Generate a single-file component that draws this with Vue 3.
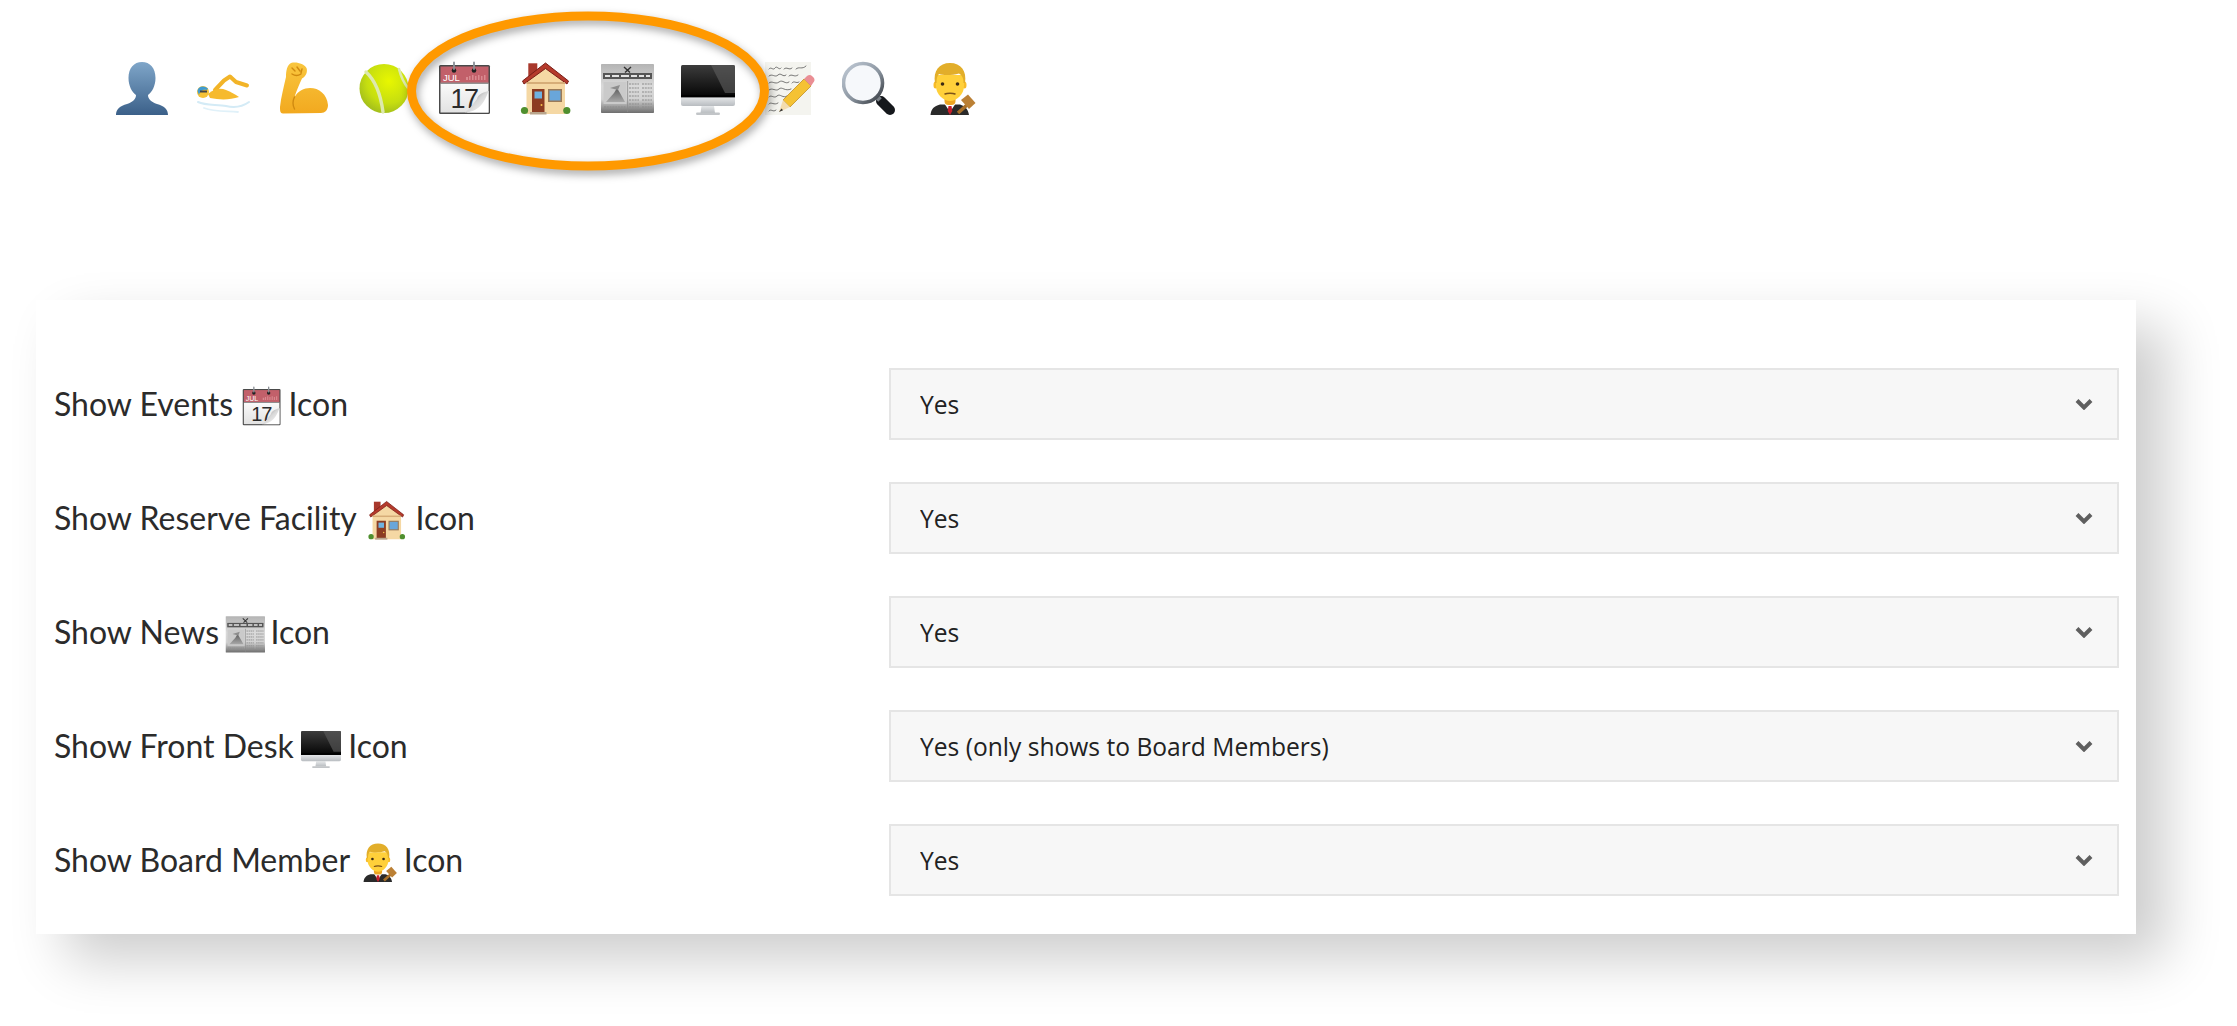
<script setup>
const topIcons = ['person', 'swimmer', 'muscle', 'tennis', 'calendar', 'house', 'news', 'monitor', 'memo', 'magnifier', 'judge']
const options = ['Yes', 'No', 'Yes (only shows to Board Members)']
const rows = [
  { label: 'Show Events', icon: 'calendar', value: 'Yes' },
  { label: 'Show Reserve Facility', icon: 'house', value: 'Yes' },
  { label: 'Show News', icon: 'news', value: 'Yes' },
  { label: 'Show Front Desk', icon: 'monitor', value: 'Yes (only shows to Board Members)' },
  { label: 'Show Board Member', icon: 'judge', value: 'Yes' },
]
</script>

<template>
  <div class="page">
    <svg class="defs" width="0" height="0" aria-hidden="true">
      <defs>
        <linearGradient id="g-person" x1="0" y1="0" x2="0" y2="1">
          <stop offset="0" stop-color="#7fa6c9" /><stop offset="1" stop-color="#3b6089" />
        </linearGradient>
        <linearGradient id="g-muscle" x1="0" y1="0" x2="0" y2="1">
          <stop offset="0" stop-color="#f9c63e" /><stop offset="1" stop-color="#f2a91f" />
        </linearGradient>
        <radialGradient id="g-ball" cx="0.6" cy="0.35" r="0.75">
          <stop offset="0" stop-color="#e8f700" /><stop offset="0.6" stop-color="#c6de10" /><stop offset="1" stop-color="#98b420" />
        </radialGradient>
        <linearGradient id="g-page" x1="0" y1="0" x2="0" y2="1">
          <stop offset="0" stop-color="#fafafa" /><stop offset="1" stop-color="#e2e2e2" />
        </linearGradient>
        <linearGradient id="g-curl" x1="0" y1="0" x2="1" y2="1">
          <stop offset="0" stop-color="#777" /><stop offset="0.5" stop-color="#d8d8d8" /><stop offset="1" stop-color="#ffffff" />
        </linearGradient>
        <linearGradient id="g-news" x1="0" y1="0" x2="0" y2="1">
          <stop offset="0" stop-color="#b4b4b4" /><stop offset="0.45" stop-color="#dadada" /><stop offset="0.72" stop-color="#d2d2d2" /><stop offset="1" stop-color="#6e6e6e" />
        </linearGradient>
        <linearGradient id="g-hill" x1="0" y1="0" x2="0" y2="1">
          <stop offset="0" stop-color="#5e5e5e" /><stop offset="1" stop-color="#a8a8a8" />
        </linearGradient>
        <linearGradient id="g-screen" x1="0" y1="0" x2="0" y2="1">
          <stop offset="0" stop-color="#3c3c3c" /><stop offset="0.85" stop-color="#0c0c0c" /><stop offset="1" stop-color="#000" />
        </linearGradient>
        <linearGradient id="g-chin" x1="0" y1="0" x2="0" y2="1">
          <stop offset="0" stop-color="#e6e8ea" /><stop offset="1" stop-color="#b8bcc0" />
        </linearGradient>
        <linearGradient id="g-lens" x1="0" y1="0" x2="1" y2="1">
          <stop offset="0" stop-color="#c2ccd8" /><stop offset="0.55" stop-color="#8b95a0" /><stop offset="1" stop-color="#30343a" />
        </linearGradient>
      </defs>

      <symbol id="person" viewBox="0 0 54 54">
        <path fill="url(#g-person)" d="M1 54C1 48 5 45 12 43C18 41 21 38 21 34C17 31 13.5 25 13.5 17C13.5 7 19 1 27 1C35 1 40.5 7 40.5 17C40.5 25 37 31 33 34C33 38 36 41 42 43C49 45 53 48 53 54Z" />
      </symbol>

      <symbol id="swimmer" viewBox="0 0 54 54">
        <g fill="none" stroke-linecap="round">
          <path stroke="#d4ebf6" stroke-width="2" d="M2 41C10 45 22 43 30 45C38 47 46 46 53 41" />
          <path stroke="#e0f1f9" stroke-width="1.800" d="M8 47C18 51 30 50 42 51" />
          <path stroke="#f2b428" stroke-width="4" stroke-linejoin="round" d="M19 29L28 19.500L34 15.500L40 21L51 24.500" />
        </g>
        <path fill="#f6ba2e" d="M12 33C19 27 25 27 30 29C35 31 39 33 43 36C34 39 24 39 14 37Z" />
        <circle cx="7" cy="31" r="6" fill="#f7c235" />
        <path fill="#3f9bd1" d="M1.500 30C2 25 8 24 12 27.500L11 29C8 28 4 29 3 34Z" />
        <rect x="4" y="29.500" width="7" height="2" fill="#444" />
      </symbol>

      <symbol id="muscle" viewBox="0 0 54 54">
        <path fill="url(#g-muscle)" d="M14 2C20 0.500 27 3 29.500 7C31 11 28.500 16 25 17.500C22.500 23 19.500 30 17.500 36C21 30 27 27 33 27C42 27 50 33 51 44C51 49 48 52 44 52L6 52.500C3 52.500 3 49 3 46C4 36 7 25 9 16C9 10 10 4 14 2Z" />
        <path fill="none" stroke="#d08a10" stroke-width="1.400" stroke-linecap="round" d="M15 7L18 10M20 6L23 10M25 8L24 12M15 13C18 15 21 15 24 13M17.500 36C15.500 40 15.500 44 17.500 48" />
      </symbol>

      <symbol id="tennis" viewBox="0 0 54 54">
        <circle cx="27" cy="27.500" r="24.500" fill="url(#g-ball)" />
        <path fill="none" stroke="#dde9ad" stroke-width="3.400" stroke-linecap="round" d="M9 11C19 20 24 36 26 51" />
        <path fill="none" stroke="#dde9ad" stroke-width="2.600" stroke-linecap="round" d="M42 8C44 16 47 22 51 27" />
      </symbol>

      <symbol id="calendar" viewBox="0 0 54 54">
        <rect x="1" y="4" width="51" height="49" rx="1.500" fill="#4a4a4a" />
        <rect x="2.500" y="5.500" width="48" height="17" fill="#c2606a" />
        <rect x="2.500" y="22.500" width="48" height="29" fill="url(#g-page)" />
        <rect x="2.500" y="21.500" width="48" height="1.400" fill="#8e8e8e" />
        <path fill="#d98a90" d="M28 16h2v3h-2zM31 15h1.500v4H31zM34 14h1.500v5H34zM37 15h1.500v4H37zM40 14h1.500v5H40zM43 15h1.500v4H43zM46 14h1.500v5H46z" />
        <g fill="#222">
          <circle cx="16" cy="9.500" r="2.300" /><circle cx="36" cy="9.500" r="2.300" />
        </g>
        <g stroke="#8a8f96" stroke-width="1.800" stroke-linecap="round">
          <path d="M16 1.500V8M36 1.500V8" />
        </g>
      </symbol>

      <symbol id="calendar-curl" viewBox="0 0 54 54">
        <path fill="#fff" d="M50.500 30L29 51.500H50.500Z" />
        <path fill="url(#g-curl)" d="M50.500 30C43 32 40 34 39 38C35 43 32 48 27 51.500C36 51 45 47 50.500 30Z" />
      </symbol>

      <symbol id="house" viewBox="0 0 54 54">
        <rect x="9.300" y="2.300" width="9" height="13" fill="#a8382c" />
        <path fill="#f5d8a4" d="M7.500 21L26.500 6L46 21V53H7.500Z" />
        <path fill="#b53a2c" stroke="#7a1d16" stroke-width="1" stroke-linejoin="round" d="M26.500 2L49.500 20L48 23L26.500 7.500L5 23L3.500 20Z" />
        <rect x="7.500" y="21" width="38.500" height="2" fill="#d6ad78" />
        <rect x="13" y="28" width="12.500" height="23.500" fill="#8c3c22" />
        <rect x="15.500" y="30.500" width="7.500" height="7" fill="#6fb2e0" />
        <circle cx="22.500" cy="44" r="1" fill="#f3c14a" />
        <rect x="29" y="28" width="14" height="13" fill="#9a7a58" />
        <rect x="30.500" y="29.500" width="11" height="10" fill="#69a6da" />
        <rect x="11" y="51" width="16.500" height="2.500" fill="#b9a58c" />
        <circle cx="5.500" cy="49.500" r="3.600" fill="#4f8f2e" /><circle cx="47.800" cy="49.500" r="3.600" fill="#4f8f2e" />
      </symbol>

      <symbol id="news" viewBox="0 0 54 54">
        <rect x="1" y="3" width="53" height="49" rx="0.800" fill="url(#g-news)" />
        <rect x="3" y="12" width="49" height="6" fill="#565656" />
        <path fill="#e4e4e4" d="M5 14h5v2H5zM12 14h7v2h-7zM21 14h8v2h-8zM31 14h6v2h-6zM39 14h5v2h-5zM46 14h4v2h-4z" />
        <path fill="none" stroke="#333" stroke-width="1.400" d="M24 6L30 11.500M31 6L25 11.500" />
        <rect x="3.500" y="21" width="23" height="22" fill="#cacaca" />
        <path fill="url(#g-hill)" d="M6 41L14 32L17 27L20 32L25 41Z" />
        <path fill="#8d8d8d" d="M10 27L20 24L18 29Z" />
        <g fill="none" stroke="#8c8c8c" stroke-width="1.200" stroke-dasharray="2 0.800">
          <path d="M29 23H39M42 23H52M29 27H39M42 27H52M29 31H39M42 31H52M29 35H39M42 35H52M29 39H39M42 39H52M29 43H39M42 43H52M4 46H26M29 46H39M42 46H52" />
        </g>
        <rect x="27.300" y="20" width="0.800" height="31" fill="#8a8a8a" />
      </symbol>

      <symbol id="monitor" viewBox="0 0 54 54">
        <path fill="url(#g-chin)" d="M20.500 45H33L34 52H19.500Z" />
        <rect x="15" y="51.500" width="24" height="2.500" rx="1.200" fill="#c2c5c8" />
        <path fill="url(#g-screen)" d="M1.500 4H52.500Q54 4 54 5.500V37H0V5.500Q0 4 1.500 4Z" />
        <path fill="#5a5a5a" opacity="0.650" d="M30 4H52.500Q54 4 54 5.500V32H44Z" />
        <path fill="url(#g-chin)" d="M0 36H54V43Q54 45 52 45H2Q0 45 0 43Z" />
        <rect x="0" y="34" width="54" height="2.400" fill="#000" />
      </symbol>

      <symbol id="memo" viewBox="0 0 54 54">
        <rect x="4" y="1" width="46" height="53" fill="#f4f4ef" />
        <g fill="none" stroke="#555" stroke-width="0.800" stroke-linecap="round">
          <path d="M8 8C10 5 12 10 14 7S18 10 20 7M23 8C26 5 28 10 31 7M35 8C38 5 41 9 45 5" />
          <path d="M8 15C11 12 14 17 17 14S22 17 25 14M28 15C31 12 33 17 37 14" />
          <path d="M8 22C11 19 14 24 18 21S24 24 28 21M31 22C33 19 35 23 38 21" />
          <path d="M8 29C11 26 15 31 18 28S24 31 30 28" />
          <path d="M8 36C10 33 13 38 16 35S22 38 26 35" />
          <path d="M8 43C10 40 13 45 17 42" />
          <path d="M8 50C10 47 12 52 15 49" />
        </g>
        <path fill="#f5c233" stroke="#b9861a" stroke-width="0.700" d="M22 39L43 18L50 25L29 46Z" />
        <path fill="#ea8e94" d="M43 18L46 15C48 13.500 50 14 51 15L53 17C54 19 53.500 20.500 52 22L50 25Z" />
        <path fill="#f3dcae" d="M22 39L29 46L18 51Z" />
        <path fill="#333" d="M20.500 47.500L22 49.200L18 51Z" />
      </symbol>

      <symbol id="magnifier" viewBox="0 0 54 54">
        <path stroke="#15181c" stroke-width="10" stroke-linecap="round" d="M39 40L48 49" />
        <path stroke="#7c8288" stroke-width="5" d="M33 34L38 39" />
        <circle cx="21" cy="22" r="19.500" fill="#f6f8fb" stroke="url(#g-lens)" stroke-width="3.600" />
      </symbol>

      <symbol id="judge" viewBox="0 0 54 54">
        <g transform="translate(3 0)">
          <path fill="#2a2a2a" d="M4.500 54C5 48 8 45 14 43.500L34 43.500C39 45 42 48 43 54Z" />
          <path fill="#fff" d="M18 42L24 51L30 42Z" />
          <path fill="#c8202c" d="M22.500 45H25.500L26.300 50L24 54L21.700 50Z" />
          <rect x="18.500" y="35" width="11" height="9" rx="4" fill="#eda522" />
          <ellipse cx="9.500" cy="24" rx="2" ry="3.500" fill="#f8bb28" /><ellipse cx="38.500" cy="24" rx="2" ry="3.500" fill="#f8bb28" />
          <path fill="#ffd03a" d="M10 14H38V25C38 33 31 40 24 40C17 40 10 33 10 25Z" />
          <path fill="#e2ae2a" d="M9 22C7 10 13 2 24 2C35 2 41 10 39 22L37.500 22C37.500 17 36 14 33 12.500C26 14.500 17 14.500 13 13C11 15 10.500 18 10.500 22Z" />
          <circle cx="16.500" cy="23" r="1.800" fill="#3c2a14" /><circle cx="31.500" cy="23" r="1.800" fill="#3c2a14" />
          <path fill="none" stroke="#7e5418" stroke-width="1.500" stroke-linecap="round" d="M19 33C21 32 27 32 29 33" />
          <path stroke="#a86f28" stroke-width="3.600" d="M32 52L41 44" />
          <path fill="#bb8035" d="M35 39L42 33.500L49.500 42L43 48Z" />
        </g>
      </symbol>
    </svg>

    <div class="emoji-strip">
      <svg v-for="name in topIcons" :key="name" class="strip-icon" viewBox="0 0 54 54">
        <use :href="`#${name}`" />
        <template v-if="name === 'calendar'">
          <text x="5" y="20" class="cal-month">JUL</text>
          <text x="12.500" y="47" class="cal-day">17</text>
          <use href="#calendar-curl" />
        </template>
      </svg>
      <svg class="ring" viewBox="0 0 372 168" aria-hidden="true">
        <ellipse cx="186" cy="80" rx="176.500" ry="75" fill="none" stroke="#ff9900" stroke-width="9" />
      </svg>
    </div>

    <section class="card">
      <div v-for="row in rows" :key="row.label" class="row">
        <label class="label">{{ row.label }} <svg class="label-icon" :class="`i-${row.icon}`" viewBox="0 0 54 54"><use :href="`#${row.icon}`" /><template v-if="row.icon === 'calendar'"><text x="5" y="20" class="cal-month">JUL</text><text x="12.500" y="47" class="cal-day">17</text><use href="#calendar-curl" /></template></svg> Icon</label>
        <div class="select-wrap">
          <select class="select" :value="row.value">
            <option v-for="opt in options" :key="opt" :value="opt">{{ opt }}</option>
          </select>
          <svg class="chevron" viewBox="0 0 18 12" aria-hidden="true">
            <path d="M2 2.500L9 9.500L16 2.500" fill="none" stroke="#5f5f5f" stroke-width="4" />
          </svg>
        </div>
      </div>
    </section>
  </div>
</template>

<style scoped>
.page {
  position: relative;
  width: 2237px;
  height: 1026px;
  overflow: hidden;
  background: #fff;
  padding-top: 61px;
  box-sizing: border-box;
}
.defs {
  position: absolute;
}
.emoji-strip {
  position: relative;
  display: flex;
  gap: 26.8px;
  height: 55px;
  margin-left: 115px;
  margin-bottom: 184px;
}
.strip-icon {
  width: 54px;
  height: 54px;
  flex: none;
}
.ring {
  position: absolute;
  left: 287px;
  top: -50px;
  width: 372px;
  height: 168px;
  overflow: visible;
  filter: drop-shadow(2px 4px 4px rgba(0, 0, 0, 0.35));
}
.cal-month {
  font-family: "Liberation Sans", sans-serif;
  font-size: 9.500px;
  fill: #fff;
}
.cal-day {
  font-family: "Liberation Sans", sans-serif;
  font-size: 27px;
  letter-spacing: -1.500px;
  fill: #2a2a2a;
}
.card {
  width: 2100px;
  height: 634px;
  margin-left: 36px;
  padding: 68px 17px 38px 18px;
  box-sizing: border-box;
  display: flex;
  flex-direction: column;
  gap: 42px;
  background: #fff;
  box-shadow: 30px 26px 52px rgba(0, 0, 0, 0.2);
}
.row {
  display: grid;
  grid-template-columns: 835px 1fr;
  align-items: center;
  height: 72px;
}
.label {
  padding-top: 2px;
  font-family: Lato, "Liberation Sans", sans-serif;
  font-size: 32px;
  color: #2b2b2b;
  white-space: nowrap;
}
.label-icon {
  width: 40px;
  height: 40px;
  vertical-align: -10px;
}
.i-calendar {
  margin: 0 -1.500px 0 0.500px;
}
.i-house {
  margin: 0 0.500px 0 2.500px;
}
.i-news {
  margin: 0 -3px 0 -2px;
}
.i-monitor {
  margin: 0 -1px 0 -1px;
}
.i-judge {
  margin: 0 -2px 0 0;
}
.select-wrap {
  position: relative;
  height: 72px;
}
.select {
  appearance: none;
  width: 100%;
  height: 100%;
  box-sizing: border-box;
  padding: 0 29px;
  border: 2px solid #e5e5e5;
  border-radius: 0;
  background: #f7f7f7;
  font-family: "Open Sans", "Noto Sans", sans-serif;
  font-size: 24.600px;
  color: #222;
  outline: none;
}
.chevron {
  position: absolute;
  right: 26px;
  top: 30px;
  width: 18px;
  height: 12px;
  pointer-events: none;
}
</style>
